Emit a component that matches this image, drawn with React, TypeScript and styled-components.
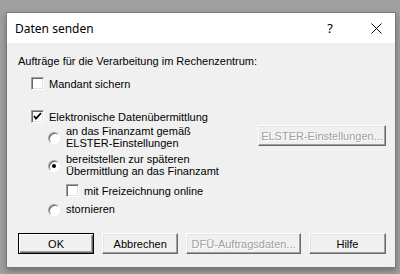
import styled, { createGlobalStyle } from 'styled-components'

const GlobalStyle = createGlobalStyle`
  html, body {
    margin: 0;
    padding: 0;
    background: #9f9f9f;
  }
  body {
    font-family: 'Liberation Sans', Arial, sans-serif;
  }
`

const Page = styled.div`
  width: 400px;
  height: 274px;
  padding: 12px 0 0 6px;
  box-sizing: border-box;
`

const Dialog = styled.div`
  width: 390px;
  height: 256px;
  box-sizing: border-box;
  border: 1px solid #7a7a7a;
  background: #f0f0f0;
  box-shadow: 0 3px 6px rgba(0, 0, 0, 0.3);
  display: flex;
  flex-direction: column;
`

const TitleBar = styled.div`
  height: 30px;
  background: #fff;
  display: flex;
  align-items: center;
  padding-left: 8px;
  font-family: 'Noto Sans', sans-serif;
  font-size: 12px;
  color: #000;
`

const TitleText = styled.div`
  flex: 1;
`

const TitleButton = styled.div<{ $w: number }>`
  width: ${(p) => p.$w}px;
  height: 30px;
  display: flex;
  align-items: center;
  justify-content: center;
  font-size: 13px;
`

const Body = styled.div`
  flex: 1;
  padding: 12px 9px 0 11px;
  font-size: 11px;
  color: #000;
  display: flex;
  flex-direction: column;
`

const Heading = styled.div`
  line-height: 13px;
  height: 13px;
`

const Row = styled.label<{ $top: number; $indent?: number }>`
  display: flex;
  align-items: center;
  gap: 5px;
  margin-top: ${(p) => p.$top}px;
  margin-left: ${(p) => p.$indent ?? 13}px;
  line-height: 12px;
`

const OptionsArea = styled.div`
  display: flex;
  justify-content: space-between;
  align-items: flex-start;
`

const OptionList = styled.div`
  display: flex;
  flex-direction: column;
  margin-left: 30px;
`

const Box = styled.span`
  width: 13px;
  height: 13px;
  box-sizing: border-box;
  background: #fff;
  border: 1px solid;
  border-color: #a0a0a0 #fff #fff #a0a0a0;
  box-shadow: inset 1px 1px #696969, inset -1px -1px #e3e3e3;
  display: flex;
  align-items: center;
  justify-content: center;
  flex-shrink: 0;
`

const Radio = styled.span<{ $on?: boolean }>`
  width: 12px;
  height: 12px;
  box-sizing: border-box;
  border-radius: 50%;
  background: #fff;
  border: 1px solid;
  border-color: #a0a0a0 #fff #fff #a0a0a0;
  box-shadow: inset 1px 1px #696969;
  display: flex;
  align-items: center;
  justify-content: center;
  flex-shrink: 0;
  &::after {
    content: '';
    display: ${(p) => (p.$on ? 'block' : 'none')};
    width: 4px;
    height: 4px;
    border-radius: 50%;
    background: #000;
  }
`

const RadioRow = styled.label<{ $top: number }>`
  display: flex;
  align-items: center;
  gap: 6px;
  margin-top: ${(p) => p.$top}px;
  line-height: 11.5px;
`

const Button = styled.button<{ $w: number; $default?: boolean; $disabled?: boolean }>`
  width: ${(p) => p.$w}px;
  height: 21px;
  box-sizing: border-box;
  padding: 0;
  white-space: nowrap;
  font-family: 'Liberation Sans', Arial, sans-serif;
  font-size: 11px;
  color: ${(p) => (p.$disabled ? '#a0a0a0' : '#000')};
  background: #f0f0f0;
  border: 1px solid;
  border-color: ${(p) => (p.$default ? '#000' : '#fff #696969 #696969 #fff')};
  box-shadow: ${(p) =>
    p.$default
      ? 'inset 1px 1px #fff, inset -1px -1px #696969, inset -2px -2px #a0a0a0'
      : 'inset -1px -1px #a0a0a0, inset 1px 1px #e3e3e3'};
  ${(p) => (p.$disabled ? 'text-shadow: 1px 1px #fff;' : '')}
`

const ElsterButton = styled(Button)`
  margin-top: 2px;
`

const Footer = styled.div`
  display: flex;
  gap: 8px;
  margin-top: auto;
  margin-bottom: 13px;
`

const Check = () => (
  <svg width="9" height="9" viewBox="0 0 9 9">
    <path d="M1 4 L3 6.5 L8 1" stroke="#000" strokeWidth="1.8" fill="none" />
  </svg>
)

const App = () => {
  return (
    <Page>
      <GlobalStyle />
      <Dialog>
        <TitleBar>
          <TitleText>Daten senden</TitleText>
          <TitleButton $w={54}>?</TitleButton>
          <TitleButton $w={38}>
            <svg width="11" height="11" viewBox="0 0 11 11">
              <path d="M0.5 0.5 L10.5 10.5 M10.5 0.5 L0.5 10.5" stroke="#000" strokeWidth="1" />
            </svg>
          </TitleButton>
        </TitleBar>
        <Body>
          <Heading>Aufträge für die Verarbeitung im Rechenzentrum:</Heading>
          <Row $top={9}>
            <Box />
            Mandant sichern
          </Row>
          <Row $top={20}>
            <Box>
              <Check />
            </Box>
            Elektronische Datenübermittlung
          </Row>
          <OptionsArea>
            <OptionList>
              <RadioRow $top={3}>
                <Radio />
                <span>
                  an das Finanzamt gemäß
                  <br />
                  ELSTER-Einstellungen
                </span>
              </RadioRow>
              <RadioRow $top={5}>
                <Radio $on />
                <span>
                  bereitstellen zur späteren
                  <br />
                  Übermittlung an das Finanzamt
                </span>
              </RadioRow>
              <Row $top={7} $indent={18}>
                <Box />
                mit Freizeichnung online
              </Row>
              <RadioRow $top={7}>
                <Radio />
                stornieren
              </RadioRow>
            </OptionList>
            <ElsterButton $w={128} $disabled>
              ELSTER-Einstellungen...
            </ElsterButton>
          </OptionsArea>
          <Footer>
            <Button $w={77} $default>
              OK
            </Button>
            <Button $w={77}>Abbrechen</Button>
            <Button $w={116} $disabled>
              DFÜ-Auftragsdaten...
            </Button>
            <Button $w={78}>Hilfe</Button>
          </Footer>
        </Body>
      </Dialog>
    </Page>
  )
}

export default App
